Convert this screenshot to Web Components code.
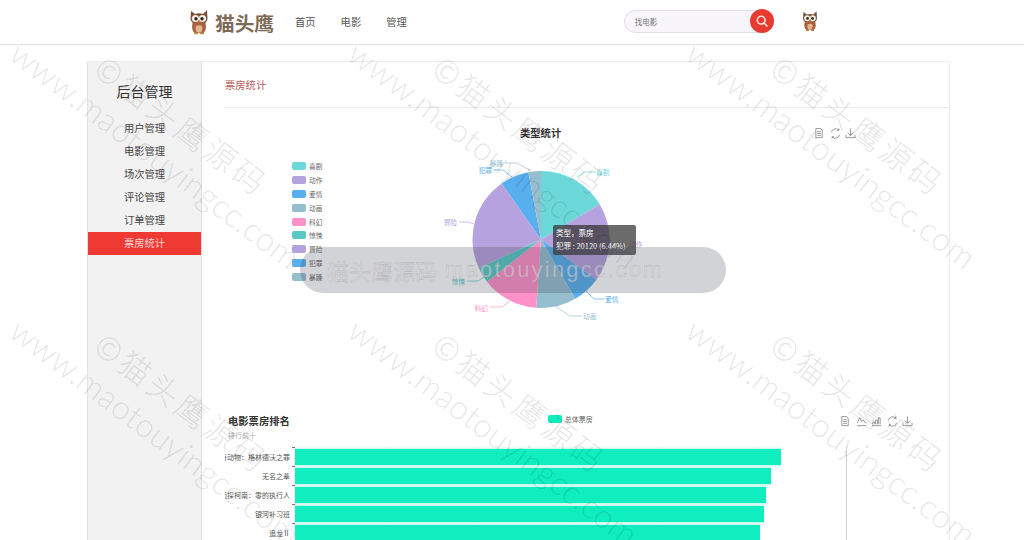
<!DOCTYPE html>
<html lang="zh-CN">

<head>
    <meta charset="UTF-8" />
    <title>票房统计</title>
    <style>
        html,
        body {
            margin: 0;
            width: 1024px;
            height: 540px;
            overflow: hidden;
            background: #fff;
            font-family: "Noto Sans CJK SC", "Liberation Sans", sans-serif;
        }

        body {
            position: relative;
        }
    </style>
</head>

<body>
    <app-header></app-header>
    <admin-page>
        <admin-sidebar slot="side"></admin-sidebar>
        <pie-chart></pie-chart>
        <bar-chart></bar-chart>
    </admin-page>
    <water-mark></water-mark>
    <promo-pill></promo-pill>

    <script>
        const FONT = '"Noto Sans CJK SC", "Liberation Sans", sans-serif';

        class OwlLogo extends HTMLElement {
            constructor() {
                super();
                this.attachShadow({ mode: 'open' }).innerHTML = `
                <style>
                    :host { display: block; width: 22px; height: 27px; }
                    svg { display: block; width: 100%; height: 100%; }
                </style>
                <svg viewBox="0 0 22 27">
                    <path d="M3 2 L7 5 Q11 3.500 15 5 L19 1 L19.500 10 Q19 15 11 15.500 Q3 15 2.500 10 Z" fill="#7a5138" />
                    <path d="M4.500 14 Q11 11 17.500 14 Q19 21 15.500 24 L6.500 24 Q3 21 4.500 14 Z" fill="#a9623f" />
                    <path d="M8 17 Q11 15.500 14 17 Q15 21 13 23.500 L9 23.500 Q7 21 8 17 Z" fill="#e3b48d" />
                    <circle cx="7.500" cy="9.500" r="3.600" fill="#f5efe6" />
                    <circle cx="14.500" cy="9.500" r="3.600" fill="#f5efe6" />
                    <circle cx="8" cy="9.800" r="1.700" fill="#33251c" />
                    <circle cx="14" cy="9.800" r="1.700" fill="#33251c" />
                    <path d="M10 11.500 L12 11.500 L11 13.500 Z" fill="#e0a13c" />
                    <path d="M6 24.500 H10 M12 24.500 H16" stroke="#c98b45" stroke-width="1.500" />
                </svg>`;
            }
        }
        customElements.define('owl-logo', OwlLogo);

        class SearchBox extends HTMLElement {
            constructor() {
                super();
                this.attachShadow({ mode: 'open' }).innerHTML = `
                <style>
                    :host { display: block; width: 150px; height: 23px; position: relative; }
                    .field {
                        box-sizing: border-box; height: 23px; border: 1px solid #dedde6; border-radius: 12px;
                        background: #f8f6fb; padding-left: 10px; font-size: 7.500px; line-height: 21px; color: #777;
                    }
                    .btn {
                        position: absolute; right: 0; top: -1px; width: 24px; height: 24px; border-radius: 50%;
                        background: #e83b30; display: flex; align-items: center; justify-content: center;
                    }
                </style>
                <div class="field">找电影</div>
                <div class="btn">
                    <svg width="14" height="14" viewBox="0 0 14 14" fill="none" stroke="#fbe3df" stroke-width="1.600">
                        <circle cx="6.200" cy="6.200" r="3.900" />
                        <path d="M9 9 L12 12" stroke-linecap="round" />
                    </svg>
                </div>`;
            }
        }
        customElements.define('search-box', SearchBox);

        class AppHeader extends HTMLElement {
            constructor() {
                super();
                this.attachShadow({ mode: 'open' }).innerHTML = `
                <style>
                    :host {
                        display: flex; align-items: center; box-sizing: border-box; height: 45px;
                        border-bottom: 1px solid #e4e4e4; padding-left: 188px;
                    }
                    .brand { font-size: 19.700px; font-weight: 700; color: #7c6a55; margin-left: 5px; width: 80px; }
                    nav { display: flex; gap: 25px; font-size: 10.300px; color: #555; margin-bottom: 2px; }
                    search-box { margin: 0 0 2px 217px; }
                    .me { margin: 0 0 2px 27px; width: 18px; height: 25px; }
                </style>
                <owl-logo></owl-logo>
                <div class="brand">猫头鹰</div>
                <nav><span>首页</span><span>电影</span><span>管理</span></nav>
                <search-box></search-box>
                <owl-logo class="me"></owl-logo>`;
            }
        }
        customElements.define('app-header', AppHeader);

        class AdminSidebar extends HTMLElement {
            constructor() {
                super();
                const items = ['用户管理', '电影管理', '场次管理', '评论管理', '订单管理', '票房统计'];
                this.attachShadow({ mode: 'open' }).innerHTML = `
                <style>
                    :host {
                        display: block; box-sizing: border-box; width: 115px; height: 100%;
                        background: #f2f2f2; border-left: 1px solid #e2e2e2; border-right: 1px solid #dedede;
                    }
                    h2 { margin: 0; padding-top: 19px; height: 36px; font-size: 14px; line-height: 20px; font-weight: 400; color: #333; text-align: center; }
                    .item { height: 23px; line-height: 22px; font-size: 10.300px; color: #444; text-align: center; }
                    .on { background: #ee3a32; color: #fbd9d6; }
                </style>
                <h2>后台管理</h2>
                ${items.map((t, i) => `<div class="item ${i === 5 ? 'on' : ''}">${t}</div>`).join('')}`;
            }
        }
        customElements.define('admin-sidebar', AdminSidebar);

        class AdminPage extends HTMLElement {
            constructor() {
                super();
                this.attachShadow({ mode: 'open' }).innerHTML = `
                <style>
                    :host {
                        display: flex; box-sizing: border-box; width: 863px; height: 600px; margin: 16px 0 0 87px;
                        border-top: 1px solid #ededed; border-right: 1px solid #eee;
                    }
                    main { flex: 1; padding-left: 23px; }
                    .title { height: 45px; border-bottom: 1px solid #ececec; font-size: 10.300px; line-height: 46px; color: #b8595c; }
                </style>
                <slot name="side"></slot>
                <main>
                    <div class="title">票房统计</div>
                    <slot></slot>
                </main>`;
            }
        }
        customElements.define('admin-page', AdminPage);

        // toolbox glyphs, same outlines in both charts
        const TOOL_ICONS = {
            data: '<path d="M2 .5 H7 L9 2.500 V10.500 H2 Z M3.500 4 H7.500 M3.500 6 H7.500 M3.500 8 H7.500" />',
            line: '<path d="M1 10.500 H11 M1.500 7.500 L4 2 L6 6 L8 4.500 L10.500 7.500" />',
            bar: '<path d="M1 10.500 H11 M2 9 V6.500 H4 V9 M5 9 V4.500 H7 V9 M8 9 V2 H10 V9" />',
            refresh: '<path d="M1.500 4.500 A5 5 0 0 1 9.500 2 M10.500 7.500 A5 5 0 0 1 2.500 10 M9.700 .5 V2.500 H7.700 M2.300 11.500 V9.500 H4.300" />',
            save: '<path d="M1 7.500 V10.500 H11 V7.500 M6 .5 V8 M3 5 L6 8 L9 5" />'
        };

        class ChartToolbox extends HTMLElement {
            constructor() {
                super();
                const names = (this.getAttribute('icons') || '').split(' ');
                this.attachShadow({ mode: 'open' }).innerHTML = `
                <style>
                    :host { display: flex; gap: 4.500px; }
                    svg { display: block; width: 11px; height: 11px; fill: none; stroke: #777; stroke-width: .8; }
                </style>
                ${names.map(n => `<svg viewBox="0 0 12 12">${TOOL_ICONS[n]}</svg>`).join('')}`;
            }
        }
        customElements.define('chart-toolbox', ChartToolbox);

        const PIE = [
            { name: '喜剧', to: 59, color: '#6dd8da', lx: 596, ly: 172, line: '596,172 585,172 577,177', anchor: 'start' },
            { name: '动作', to: 126, color: '#b6a2de', lx: 629, ly: 244, line: '', anchor: 'start' },
            { name: '爱情', to: 150, color: '#58afed', lx: 605, ly: 299, line: '604,299 594,299 585,290', anchor: 'start' },
            { name: '动画', to: 184, color: '#95bfcf', lx: 583, ly: 316, line: '582,316 570,316 555,306', anchor: 'start' },
            { name: '科幻', to: 232, color: '#ff90c8', lx: 488, ly: 308, line: '490,307 502,307 510,301', anchor: 'end' },
            { name: '惊悚', to: 245.500, color: '#59c9c6', lx: 465, ly: 281, line: '467,281 478,281 484,277', anchor: 'end' },
            { name: '冒险', to: 325, color: '#b6a2de', lx: 457, ly: 222, line: '459,222 468,222 474,224', anchor: 'end' },
            { name: '犯罪', to: 349.400, color: '#58afed', lx: 492, ly: 170, line: '494,170 503,170 512,177', anchor: 'end' },
            { name: '暴躁', to: 360, color: '#95bfcf', lx: 503, ly: 163, line: '505,163 517,163 531,171', anchor: 'end' }
        ];

        class PieChart extends HTMLElement {
            constructor() {
                super();
                const cx = 541, cy = 239.500, r = 68.500;
                let from = 0;
                const point = (deg, rad) => {
                    const a = deg * Math.PI / 180;
                    return `${(cx + rad * Math.sin(a)).toFixed(1)} ${(cy - rad * Math.cos(a)).toFixed(1)}`;
                };
                const slices = PIE.map(s => {
                    const big = s.to - from > 180 ? 1 : 0;
                    const d = `M${cx} ${cy} L${point(from, r)} A${r} ${r} 0 ${big} 1 ${point(s.to, r)} Z`;
                    from = s.to;
                    return `<path d="${d}" fill="${s.color}" />`;
                }).join('');
                const labels = PIE.map(s => `
                    ${s.line ? `<polyline points="${s.line}" fill="none" stroke="${s.color}" stroke-width=".7" />` : ''}
                    <text x="${s.lx}" y="${s.ly + 2.500}" text-anchor="${s.anchor}" font-size="6.700" fill="${s.color}">${s.name}</text>`).join('');
                const legend = PIE.map(s => `<div class="row"><i style="background:${s.color}"></i>${s.name}</div>`).join('');

                this.attachShadow({ mode: 'open' }).innerHTML = `
                <style>
                    :host { display: block; position: relative; height: 297px; font-family: ${FONT}; }
                    .head { display: flex; height: 32px; box-sizing: border-box; padding: 17px 93px 0 295px; }
                    .head b { font-size: 10.300px; line-height: 15px; color: #333; }
                    chart-toolbox { margin-left: auto; margin-top: 3px; }
                    .body { display: flex; }
                    .legend { margin: 19px 0 0 67px; width: 48px; }
                    .row { display: flex; align-items: center; gap: 3px; height: 13.900px; font-size: 6.700px; color: #666; }
                    .row i { width: 14px; height: 8px; border-radius: 2px; }
                    svg { display: block; }
                    .tip {
                        position: absolute; left: 328px; top: 117px; box-sizing: border-box; width: 83px; height: 30px;
                        padding: 2px 3px; border-radius: 2px; background: rgba(50, 50, 50, .72);
                        color: #fff; font-size: 7.500px; line-height: 12.500px; white-space: nowrap;
                    }
                </style>
                <div class="head"><b>类型统计</b><chart-toolbox icons="data refresh save"></chart-toolbox></div>
                <div class="body">
                    <div class="legend">${legend}</div>
                    <svg width="320" height="200" viewBox="340 140 320 200">${slices}${labels}</svg>
                </div>
                <div class="tip">类型，票房<br>犯罪 : 20120 (6.44%)</div>`;
            }
        }
        customElements.define('pie-chart', PieChart);

        const RANK = [
            { name: '神奇动物：格林德沃之罪', w: 486 },
            { name: '无名之辈', w: 476 },
            { name: '名侦探柯南：零的执行人', w: 471 },
            { name: '银河补习班', w: 468.500 },
            { name: '追龙Ⅱ', w: 465 }
        ];

        class BarChart extends HTMLElement {
            constructor() {
                super();
                const rows = RANK.map(r => `
                    <div class="row">
                        <div class="label"><span>${r.name}</span></div>
                        <div class="bar" style="width:${r.w}px"></div>
                    </div>`).join('');
                this.attachShadow({ mode: 'open' }).innerHTML = `
                <style>
                    :host { display: block; font-family: ${FONT}; }
                    .head { display: flex; height: 41px; box-sizing: border-box; padding: 8px 36px 0 3px; }
                    .titles b { display: block; font-size: 10.300px; line-height: 16px; color: #333; }
                    .titles small { display: block; font-size: 7px; line-height: 12px; color: #aaa; }
                    .key { display: flex; align-items: center; gap: 3px; height: 12px; margin: 0 0 0 258px; font-size: 7px; color: #666; }
                    .key i { width: 14px; height: 8px; border-radius: 2px; background: #10eebf; }
                    chart-toolbox { margin-left: auto; margin-top: 3px; }
                    .plot {
                        box-sizing: border-box; width: 622px; height: 120px; padding-top: 1px;
                        background:
                            linear-gradient(#d2d2d2, #d2d2d2) 621px 5px / 1px 100% no-repeat,
                            repeating-linear-gradient(#777 0 1px, transparent 1px 19px) 67px 1px / 3px 100% no-repeat,
                            repeating-linear-gradient(90deg, #eee 0 1px, transparent 1px 92px) 69px 0 no-repeat;
                    }
                    .row { display: flex; align-items: center; height: 19px; }
                    .label {
                        display: flex; justify-content: flex-end; flex: none; width: 65px; margin-right: 5px;
                        overflow: hidden; font-size: 7px; color: #555; white-space: nowrap;
                    }
                    .bar { height: 16px; background: #10eebf; box-shadow: 0 1.500px 0 #c9f9ee, 0 -1.500px 0 #c9f9ee; }
                </style>
                <div class="head">
                    <div class="titles"><b>电影票房排名</b><small>排行前十</small></div>
                    <div class="key"><i></i>总体票房</div>
                    <chart-toolbox icons="data line bar refresh save"></chart-toolbox>
                </div>
                <div class="plot">${rows}</div>`;
            }
        }
        customElements.define('bar-chart', BarChart);

        class WaterMark extends HTMLElement {
            constructor() {
                super();
                const cell = `<div class="cell"><div class="tilt"><div class="cn">©猫头鹰源码</div><div>www.maotouyingcc.com</div></div></div>`;
                this.attachShadow({ mode: 'open' }).innerHTML = `
                <style>
                    :host {
                        position: absolute; left: 0; top: 0; width: 1024px; height: 540px; overflow: hidden;
                        pointer-events: none; display: grid; grid-template-columns: repeat(3, 338px); grid-auto-rows: 277px;
                    }
                    .cell { position: relative; }
                    .tilt {
                        position: absolute; left: 50px; top: 2px; transform-origin: 0 0; transform: rotate(37deg);
                        white-space: nowrap; font: 300 33px/42px "Lato", "Liberation Sans", sans-serif;
                        letter-spacing: .2px; color: rgba(0, 0, 0, .11);
                    }
                    .cn { height: 37px; line-height: 37px; padding-left: 76px; font-family: "Noto Sans CJK SC", sans-serif; font-size: 32px; letter-spacing: 3.500px; }
                </style>
                ${cell.repeat(6)}`;
            }
        }
        customElements.define('water-mark', WaterMark);

        class PromoPill extends HTMLElement {
            constructor() {
                super();
                this.attachShadow({ mode: 'open' }).innerHTML = `
                <style>
                    :host {
                        position: absolute; left: 300px; top: 247px; box-sizing: border-box; width: 426px; height: 46px;
                        padding-left: 27px; border-radius: 23px; background: rgba(60, 65, 78, .23);
                        display: flex; align-items: center; gap: 8px; white-space: nowrap;
                        font-size: 22px; color: rgba(214, 214, 218, .55); -webkit-text-stroke: .3px rgba(150, 150, 156, .6);
                    }
                    .en { font-family: "Liberation Sans", sans-serif; letter-spacing: 2.200px; }
                </style>
                <span>猫头鹰源码</span><span class="en">maotouyingcc.com</span>`;
            }
        }
        customElements.define('promo-pill', PromoPill);
    </script>

</body>

</html>
